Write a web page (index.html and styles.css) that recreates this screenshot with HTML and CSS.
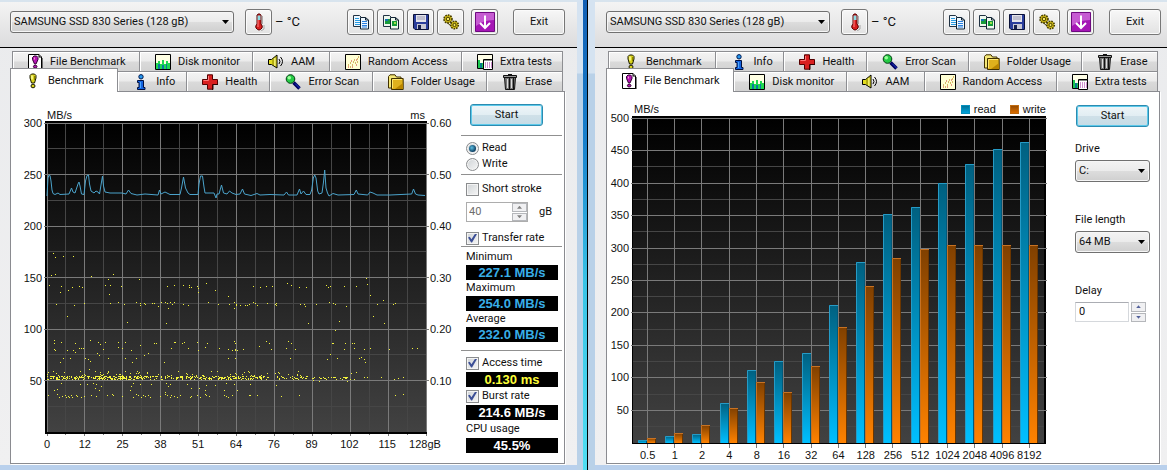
FILE: index.html
```html
<!DOCTYPE html>
<html lang="en">
<head>
<meta charset="utf-8">
<title>Disk benchmark</title>
<link rel="stylesheet" href="styles.css">
</head>
<body>
<svg class="sprite" aria-hidden="true">
  <symbol id="i-bang" viewBox="0 0 16 16"><path d="M5 2.5 6.500 1h3L11 2.500V5L9.500 10h-3L5 5z" fill="#d9d31e" stroke="#1a1a00"/><path d="M7 2.500v4" stroke="#ffffa0" stroke-width="1.500"/><path d="M9.500 3v4" stroke="#8c8600"/><ellipse cx="8" cy="13" rx="2" ry="1.800" fill="#d9d31e" stroke="#1a1a00"/></symbol>
  <symbol id="i-filebang" viewBox="0 0 16 16"><path d="M1.500.500H12L14.500 3v12.500h-13z" fill="#fff" stroke="#000"/><path d="M15 4v12H3" fill="none" stroke="#000"/><path d="M12 .500V3h2.500" fill="#ccc" stroke="#000"/><path d="M5.500 3.500 7 2h2.500L11 3.500v2L9 10H7.500L5.500 5.500z" fill="#b414b4" stroke="#300030"/><path d="M7.500 3.500v2" stroke="#f9c"/><ellipse cx="8.200" cy="12.600" rx="1.800" ry="1.400" fill="#b414b4" stroke="#300030"/></symbol>
  <symbol id="i-monitor" viewBox="0 0 16 16"><path d="M.500.500h15v15H.500z" fill="#ffffe4" stroke="#000"/><path d="M1 9h2V7h2v3h2V6h2v4h2V7h2v2h2v6H1z" fill="#20d850"/><path d="M3 10h2v5H3zM7 11h2v4H7zM11 10h1v5h-1z" fill="#087ca0"/></symbol>
  <symbol id="i-speaker" viewBox="0 0 16 16"><path d="M.500 5.500h3L9 1v13L3.500 10.500h-3z" fill="#e3dd22" stroke="#000"/><path d="M5 4.500v6.500M8 2.500v10" stroke="#827c00"/><path d="M7 4v8" stroke="#ffffa0"/><path d="M11 5q2 2.500 0 5M12.500 3q4 4.500 0 9" fill="none" stroke="#000"/></symbol>
  <symbol id="i-random" viewBox="0 0 16 16"><path d="M.500.500h15v15H.500z" fill="#ffffd4" stroke="#000"/><path d="M3 11h1M5 13h1M5 9h1M7 11h1M8 8h1M10 9h1M9 6h1M12 5h1M12 8h1M13 3h1" stroke="#b07000"/><path d="M3 13h1M7 13h1M11 11h1M6 7h1M11 6h1" stroke="#c33"/></symbol>
  <symbol id="i-extra" viewBox="0 0 16 16"><path d="M.500.500h15v14H.500z" fill="#ffffe8" stroke="#000"/><path d="M1 6h2v3h3v5H1z" fill="#1cc850"/><path d="M3 9h2v5H3z" fill="#087890"/><path d="M6.500 5.500h9v10h-9z" fill="#fff" stroke="#000"/><path d="M7 6.500h8" stroke="#888"/><path d="M8 9h7M8 11h7M8 13h7" stroke="#a020a0" stroke-dasharray="1 1"/></symbol>
  <symbol id="i-info" viewBox="0 0 16 16"><circle cx="8" cy="2.800" r="2.200" fill="#2698ee" stroke="#001850"/><path d="M4.500 6.500h6v7h1.500v2H4.500v-2H6V8.500H4.500z" fill="#1463e0" stroke="#001040"/><path d="M7.500 8v6" stroke="#4aa8ff"/></symbol>
  <symbol id="i-health" viewBox="0 0 16 16"><path d="M5.500.800h5v4.700h5v5h-5v4.700h-5v-4.700h-5v-5h5z" fill="#d92020" stroke="#500"/><path d="M6.500 2v4.500h-5" fill="none" stroke="#f77"/><path d="M10 15.500h1v-5h5" fill="none" stroke="#300"/></symbol>
  <symbol id="i-scan" viewBox="0 0 16 16"><path d="m8.500 8.500 6 6" stroke="#000060" stroke-width="3.500"/><path d="m10 9.500 4.500 4.500" stroke="#2040d0"/><circle cx="5.500" cy="5" r="4.300" fill="#25ca45" stroke="#004010"/><circle cx="4.300" cy="3.800" r="1.800" fill="#9f9"/></symbol>
  <symbol id="i-folder" viewBox="0 0 16 16"><path d="M.500 14V2.500L2 .800h5L8.500 3H13v11z" fill="#f5e878" stroke="#403000"/><path d="M3.500 4.500h11.700v11H3.500z" fill="#dfb11d" stroke="#403000"/><path d="M4.500 14V5.500H14" fill="none" stroke="#ffe870"/><path d="M7 15h8V9z" fill="#b98600"/></symbol>
  <symbol id="i-trash" viewBox="0 0 16 16"><path d="M2.500 3.500h11l-1 12h-9z" fill="#777" stroke="#111"/><path d="M1.500 1.500h13v2h-13zM6 .500h4" fill="#999" stroke="#111"/><path d="M5.500 5v9M9.500 5v9" stroke="#ddd"/><path d="M7.500 4v11M11.500 4v11" stroke="#111"/></symbol>
  <symbol id="i-thermo" viewBox="0 0 16 18"><path d="M6 2q2-2.500 4 0v9q2 2 1 4-1.500 2-3 2t-3-2q-1-2 1-4z" fill="#d81e1e" stroke="#500"/><path d="M6.500 2.500h3V7h-3z" fill="#8cdde4"/><path d="M7 7v7" stroke="#f88"/><path d="M11.500 3v8M13 12v4l-3 2" fill="none" stroke="#999" stroke-width=".8"/></symbol>
  <symbol id="i-copy" viewBox="0 0 18 16"><path d="M1.500 1.500h6l2 2v9h-8z" fill="#eef8ff" stroke="#234"/><path d="M3 4.500h4M3 6.500h5M3 8.500h5M3 10.500h5" stroke="#2a9be0"/><path d="M8.500 3.500h5L16.500 6v9h-8z" fill="#eef8ff" stroke="#123"/><path d="M13.500 3.500V6h3" fill="none" stroke="#123"/><path d="M10 7.500h5M10 9.500h5M10 11.500h5M10 13h5" stroke="#2a80e0"/></symbol>
  <symbol id="i-copyimg" viewBox="0 0 18 16"><path d="M1.500 1.500h6l2 2v9h-8z" fill="#eef8ee" stroke="#234"/><path d="M3 5h5v5H3z" fill="#189b3b"/><path d="M3 5h3v2H3z" fill="#1670b0"/><path d="M8.500 3.500h5L16.500 6v9h-8z" fill="#eef8ee" stroke="#123"/><path d="M13.500 3.500V6h3" fill="none" stroke="#123"/><path d="M10 7h5v5h-5z" fill="#149a38"/><path d="M12 8h2v2h-2z" fill="#9ce04a"/></symbol>
  <symbol id="i-save" viewBox="0 0 18 16"><path d="M1.500.500h15v15H3L1.500 14z" fill="#2b3e9c" stroke="#0b1238"/><path d="M4 1h10v7H4z" fill="#e4e4ea"/><path d="M5 3h8M5 5h8" stroke="#9a9ab4"/><path d="M5 10h9v5H5z" fill="#c9c9d4"/><path d="M6 11h3v4H6z" fill="#16204e"/></symbol>
  <symbol id="i-gears" viewBox="0 0 18 16"><circle cx="6" cy="5" r="4" fill="#d0bb18" stroke="#443b00" stroke-width="1.600" stroke-dasharray="1.600 1"/><circle cx="6" cy="5" r="1.800" fill="#f4e860" stroke="#443b00"/><circle cx="12.500" cy="11" r="3.800" fill="#d0bb18" stroke="#443b00" stroke-width="1.600" stroke-dasharray="1.600 1"/><circle cx="12.500" cy="11" r="1.600" fill="#f4e860" stroke="#443b00"/><path d="M5 8.500 9 12" stroke="#443b00"/></symbol>
  <symbol id="i-down" viewBox="0 0 20 20"><path d="M.500.500h19v19H.500z" fill="#a516b5" stroke="#6e0a80"/><path d="M1 1h18v7Q8 8 1 14z" fill="#c65bd2"/><path d="M10 3.500V16M5 11l5 5 5-5" fill="none" stroke="#fff" stroke-width="2"/></symbol>
</svg>

<main class="desktop">
  <section class="app app-left" aria-label="Benchmark window">
    <header class="toolbar">
      <span class="picker picker-drive"><select aria-label="Disk"><option>SAMSUNG SSD 830 Series (128 gB)</option></select></span>
      <button class="tool" aria-label="Temperature"><svg class="icon-thermo"><use href="#i-thermo"/></svg></button>
      <span class="temp">– °C</span>
      <span class="tools">
        <button class="tool" aria-label="Copy text"><svg><use href="#i-copy"/></svg></button>
        <button class="tool" aria-label="Copy image"><svg><use href="#i-copyimg"/></svg></button>
        <button class="tool" aria-label="Save"><svg><use href="#i-save"/></svg></button>
        <button class="tool" aria-label="Options"><svg><use href="#i-gears"/></svg></button>
      </span>
      <button class="tool" aria-label="Minimize"><svg class="icon-down"><use href="#i-down"/></svg></button>
      <button class="exit">Exit</button>
    </header>
    <nav class="tabs">
      <div class="tab-row">
        <button class="tab t-file"><svg><use href="#i-filebang"/></svg>File Benchmark</button>
        <button class="tab t-disk"><svg><use href="#i-monitor"/></svg>Disk monitor</button>
        <button class="tab t-aam"><svg><use href="#i-speaker"/></svg>AAM</button>
        <button class="tab t-random"><svg><use href="#i-random"/></svg>Random Access</button>
        <button class="tab t-extra"><svg><use href="#i-extra"/></svg>Extra tests</button>
      </div>
      <div class="tab-row tab-row-front">
        <button class="tab t-bench active"><svg><use href="#i-bang"/></svg>Benchmark</button>
        <button class="tab t-info"><svg><use href="#i-info"/></svg>Info</button>
        <button class="tab t-health"><svg><use href="#i-health"/></svg>Health</button>
        <button class="tab t-scan"><svg><use href="#i-scan"/></svg>Error Scan</button>
        <button class="tab t-folder"><svg><use href="#i-folder"/></svg>Folder Usage</button>
        <button class="tab t-erase"><svg><use href="#i-trash"/></svg>Erase</button>
      </div>
    </nav>
    <div class="panel panel-bench">
      <div class="chart chart-transfer">
        <div class="chart-head"><span>MB/s</span><span>ms</span></div>
        <div class="y-axis"><span>300</span><span>250</span><span>200</span><span>150</span><span>100</span><span>50</span></div>
        <svg class="plot" id="transfer" viewBox="45 121 382 313" role="img" aria-label="Transfer rate and access time"></svg>
        <div class="y-axis y-axis-right"><span>0.60</span><span>0.50</span><span>0.40</span><span>0.30</span><span>0.20</span><span>0.10</span></div>
        <div class="x-axis"><div class="x-labels"><span>0</span><span>12</span><span>25</span><span>38</span><span>51</span><span>64</span><span>76</span><span>89</span><span>102</span><span>115</span><span>128gB</span></div></div>
      </div>
      <aside class="side">
        <button class="start">Start</button>
        <div class="group group-mode">
          <label class="check"><input type="radio" name="mode" checked>Read</label>
          <label class="check"><input type="radio" name="mode">Write</label>
        </div>
        <div class="group group-stroke">
          <label class="check"><input type="checkbox">Short stroke</label>
          <div class="stroke-size">
            <span class="spin spin-off"><input type="text" value="40" aria-label="Stroke size" disabled><span class="steps"><button class="up" aria-label="More" disabled></button><button class="dn" aria-label="Less" disabled></button></span></span>
            <span>gB</span>
          </div>
          <label class="check"><input type="checkbox" checked>Transfer rate</label>
        </div>
        <div class="group group-rate">
          <span class="caption">Minimum</span><output class="blue">227.1 MB/s</output>
          <span class="caption">Maximum</span><output class="blue">254.0 MB/s</output>
          <span class="caption">Average</span><output class="blue">232.0 MB/s</output>
        </div>
        <div class="group group-access">
          <label class="check"><input type="checkbox" checked>Access time</label><output class="yellow">0.130 ms</output>
          <label class="check"><input type="checkbox" checked>Burst rate</label><output>214.6 MB/s</output>
          <span class="caption">CPU usage</span><output>45.5%</output>
        </div>
      </aside>
    </div>
  </section>

  <div class="gap"><i class="frame"></i><i class="wallpaper"></i><i class="frame"></i></div>

  <section class="app app-right" aria-label="File benchmark window">
    <header class="toolbar">
      <span class="picker picker-drive"><select aria-label="Disk"><option>SAMSUNG SSD 830 Series (128 gB)</option></select></span>
      <button class="tool" aria-label="Temperature"><svg class="icon-thermo"><use href="#i-thermo"/></svg></button>
      <span class="temp">– °C</span>
      <span class="tools">
        <button class="tool" aria-label="Copy text"><svg><use href="#i-copy"/></svg></button>
        <button class="tool" aria-label="Copy image"><svg><use href="#i-copyimg"/></svg></button>
        <button class="tool" aria-label="Save"><svg><use href="#i-save"/></svg></button>
        <button class="tool" aria-label="Options"><svg><use href="#i-gears"/></svg></button>
      </span>
      <button class="tool" aria-label="Minimize"><svg class="icon-down"><use href="#i-down"/></svg></button>
      <button class="exit">Exit</button>
    </header>
    <nav class="tabs">
      <div class="tab-row">
        <button class="tab t-bench"><svg><use href="#i-bang"/></svg>Benchmark</button>
        <button class="tab t-info"><svg><use href="#i-info"/></svg>Info</button>
        <button class="tab t-health"><svg><use href="#i-health"/></svg>Health</button>
        <button class="tab t-scan"><svg><use href="#i-scan"/></svg>Error Scan</button>
        <button class="tab t-folder"><svg><use href="#i-folder"/></svg>Folder Usage</button>
        <button class="tab t-erase"><svg><use href="#i-trash"/></svg>Erase</button>
      </div>
      <div class="tab-row tab-row-front">
        <button class="tab t-file active"><svg><use href="#i-filebang"/></svg>File Benchmark</button>
        <button class="tab t-disk"><svg><use href="#i-monitor"/></svg>Disk monitor</button>
        <button class="tab t-aam"><svg><use href="#i-speaker"/></svg>AAM</button>
        <button class="tab t-random"><svg><use href="#i-random"/></svg>Random Access</button>
        <button class="tab t-extra"><svg><use href="#i-extra"/></svg>Extra tests</button>
      </div>
    </nav>
    <div class="panel panel-file">
      <div class="chart chart-file">
        <div class="chart-head"><span>MB/s</span><span class="legend"><i class="key key-read"></i>read<i class="key key-write"></i>write</span></div>
        <div class="y-axis"><span>500</span><span>450</span><span>400</span><span>350</span><span>300</span><span>250</span><span>200</span><span>150</span><span>100</span><span>50</span></div>
        <svg class="plot" id="file" viewBox="632 116 414 328" role="img" aria-label="Read and write rate by block size"></svg>
        <div class="x-axis"><div class="x-labels"><span>0.5</span><span>1</span><span>2</span><span>4</span><span>8</span><span>16</span><span>32</span><span>64</span><span>128</span><span>256</span><span>512</span><span>1024</span><span>2048</span><span>4096</span><span>8192</span></div></div>
      </div>
      <aside class="options">
        <button class="start">Start</button>
        <div class="field"><label for="drive">Drive</label><span class="picker"><select id="drive"><option>C:</option></select></span></div>
        <div class="field"><label for="length">File length</label><span class="picker"><select id="length"><option>64 MB</option></select></span></div>
        <div class="field"><label for="delay">Delay</label><span class="spin spin-delay"><input id="delay" type="text" value="0"><span class="steps"><button class="up" aria-label="More"></button><button class="dn" aria-label="Less"></button></span></span></div>
      </aside>
    </div>
  </section>
</main>
<script src="charts.js"></script>
</body>
</html>
```
FILE: styles.css
```css
* { box-sizing: border-box; }

body {
  margin: 0;
  min-height: 100vh;
  background: #b9d1ea;
  color: #111;
  font: 11px/16px Roboto, "Liberation Sans", sans-serif;
}

button, input, select, output { font: inherit; color: inherit; }
button { padding: 0; }
.sprite { display: none; }

.desktop {
  display: grid;
  grid-template-columns: 577fr 18px 572fr;
  min-height: 100vh;
}

.app {
  background: linear-gradient(#eaebed, #f0f0f1);
  border-top: 2px solid #d8e4ee;
  border-bottom: 5px solid #b9d0ec;
}

.gap {
  display: grid;
  grid-template-columns: 6px 5px 7px;
}
.frame { background: linear-gradient(#d5e3f1 73px, #b9d1e8 74px); }
.wallpaper {
  border-right: 1px solid #000;
  background: linear-gradient(#125fb4, #1980cc 30%, #3ac3e6 60%, #50def2);
}

/* toolbar */
.toolbar {
  display: flex;
  align-items: center;
  padding: 7px 12px 12px 10px;
  border-bottom: 1px solid #000;
  background: linear-gradient(#f4f4f4, #dcdcdd);
}
.app-right .toolbar { padding: 7px 6px 12px 11px; }

.picker { display: grid; align-items: center; }
.picker select {
  grid-area: 1 / 1;
  width: 100%;
  height: 22px;
  padding: 0 3px;
  appearance: none;
  border: 1px solid #707070;
  border-radius: 3px;
  background: linear-gradient(#f3f3f3, #ebebeb 49%, #dddddd 50%, #cfcfcf);
  box-shadow: inset 0 0 0 1px #f6f6f6;
}
.picker::after {
  content: "";
  grid-area: 1 / 1;
  justify-self: end;
  width: 7px;
  height: 4px;
  margin-right: 5px;
  background: #000;
  clip-path: polygon(0 0, 100% 0, 50% 100%);
  pointer-events: none;
}
.picker-drive { width: 224px; margin-right: 11px; }

.tool, .exit {
  display: grid;
  place-items: center;
  width: 27px;
  height: 26px;
  border: 1px solid #777;
  border-radius: 3px;
  background: linear-gradient(#f7f7f7, #e2e2e2);
  box-shadow: inset 0 0 0 1px #fbfbfb;
}
.tool svg { width: 18px; height: 16px; }
.tool .icon-thermo { width: 16px; height: 18px; }
.tool .icon-down { width: 20px; height: 20px; }
.temp { flex: 1; padding-left: 3px; font-size: 13px; }
.tools { display: flex; gap: 3px; margin-right: 7px; }
.exit { width: 52px; margin-left: 15px; }

/* tabs */
.tabs { margin: 3px 14px 0 12px; }
.app-right .tabs { margin: 3px 9px 0 13px; }
.tab-row { display: flex; }
.tab-row-front { margin-left: -2px; }
.tab {
  display: flex;
  align-items: center;
  gap: 7px;
  height: 20px;
  padding-left: 14px;
  min-width: 0;
  white-space: nowrap;
  border: solid #8d8e92;
  border-width: 1px 1px 0 1px;
  box-shadow: inset 1px 1px 0 #fff;
  background: linear-gradient(#f4f4f4, #ebebeb 48%, #dadada 52%, #d2d2d2);
}
.tab + .tab { border-left: 0; padding-left: 15px; }
.tab svg { flex: none; width: 16px; height: 16px; }
.active {
  position: relative;
  z-index: 1;
  height: 24px;
  margin: -3px 0 -1px;
  background: #fff;
}
.t-file { flex: 128 128 128px; }
.t-disk { flex: 113 113 113px; }
.t-aam { flex: 77 77 77px; }
.t-random { flex: 132 132 132px; }
.t-extra { flex: 101 101 101px; }
.t-bench { flex: 108 108 108px; }
.t-info { flex: 69 69 69px; }
.t-health { flex: 83 83 83px; }
.t-scan { flex: 102 102 102px; }
.t-folder { flex: 114 114 114px; }
.t-erase { flex: 76 76 76px; }

/* panels */
.panel {
  display: grid;
  align-items: start;
  border: 1px solid #8a8b90;
  background: #fff;
  box-shadow: 1px 1px 0 #fff;
}
.panel-bench {
  grid-template-columns: 1fr 101px;
  margin: 0 12px 0 10px;
  padding: 0 2px 10px 0;
}
.panel-file {
  grid-template-columns: 1fr 75px;
  column-gap: 29px;
  margin: 0 7px 0 11px;
  padding: 0 9px 1px 0;
}

/* charts */
.chart {
  display: grid;
  font: 11px/14px "Liberation Sans", Arial, sans-serif;
}
.chart-transfer { grid-template: 29px auto auto / 34px 1fr 34px; }
.chart-file { grid-template: 24px auto auto / 25px 1fr; }
.chart-head {
  grid-column: 2;
  display: flex;
  justify-content: space-between;
  align-items: end;
  padding: 0 2px;
  line-height: 12px;
}
.chart-file .chart-head { padding: 0 0 1px 2px; }
.legend { display: flex; align-items: center; gap: 4px; }
.key { width: 9px; height: 9px; border: 1px solid #0590bd; }
.key-read { background: linear-gradient(#007299, #00a3dc); }
.key-write { border-color: #c06b10; background: linear-gradient(#964b00, #dc6e00); margin-left: 10px; }
.plot {
  grid-row: 2;
  grid-column: 2;
  display: block;
  width: 100%;
  overflow: visible;
}
.y-axis {
  grid-row: 2;
  grid-column: 1;
  display: grid;
  grid-auto-rows: 1fr;
  margin: -5px 0 9px;
  padding-right: 3px;
  text-align: right;
}
.y-axis-right { grid-column: 3; padding: 0 0 0 3px; text-align: left; }
.x-axis { grid-column: 2; padding: 3px 2px 0; }
.x-labels { display: grid; grid-auto-flow: column; grid-auto-columns: minmax(0, 1fr); justify-items: center; }
.chart-transfer .x-labels { margin: 0 -5%; }
.chart-file .x-axis { padding: 4px 3px 0 2px; }

.grid-minor { stroke: #464646; }
.grid-major { stroke: #7a7a7a; }
.rate { fill: none; stroke: #4ba3cb; }
.dot { fill: #f2f23c; shape-rendering: crispEdges; }

/* side controls */
.start {
  width: 73px;
  height: 22px;
  border: 1px solid #2c8bb0;
  border-radius: 3px;
  background: linear-gradient(#eef5f8, #e2eef3 48%, #cfe0e8 52%, #c5dce6);
  box-shadow: inset 0 0 0 1px #5cc9ea;
}
.side { padding-top: 12px; }
.side .start { display: block; margin: 0 0 9px 9px; }
.group {
  display: flex;
  flex-direction: column;
  border-top: 1px solid #909090;
  padding-left: 5px;
}
.group-mode { padding-top: 4px; padding-bottom: 2px; }
.group-stroke { padding-top: 6px; }
.group-rate { padding-bottom: 8px; padding-top: 2px; }
.group-access { padding-top: 4px; gap: 1px; }
.group-rate, .group-access { padding-right: 4px; }
.caption { height: 16px; }
.check { display: flex; align-items: center; gap: 3px; height: 16px; white-space: nowrap; }
.check input {
  display: grid;
  place-items: center;
  flex: none;
  width: 13px;
  height: 13px;
  margin: 0;
  appearance: none;
  border: 1px solid #8a8c8e;
  background: linear-gradient(135deg, #cfd3d6, #f6f6f6);
  box-shadow: inset 0 0 0 1px #f4f4f4;
}
.check input[type="radio"] { border-radius: 50%; }
.check input[type="radio"]:checked::after {
  content: "";
  width: 7px;
  height: 7px;
  border-radius: 50%;
  background: radial-gradient(circle at 40% 40%, #5cc0e4, #0c3c60 70%);
}
.check input[type="checkbox"]:checked::after {
  content: "";
  width: 9px;
  height: 9px;
  background: #3c4f96;
  clip-path: polygon(0 45%, 20% 35%, 38% 65%, 80% 0, 100% 5%, 45% 100%, 35% 100%);
}
.stroke-size { display: flex; align-items: center; gap: 11px; margin: 5px 0 8px; }
.spin { display: flex; height: 20px; }
.spin input {
  width: 54px;
  min-width: 0;
  padding: 0 3px;
  border: 1px solid #d5d8dc;
  border-top-color: #abadb3;
  background: #fff;
}
.steps { display: grid; grid-template-rows: 1fr 1fr; gap: 1px; width: 15px; }
.steps button { display: grid; place-items: center; border: 1px solid #b5b7bb; background: #f0f0f2; }
.steps button::after { content: ""; width: 5px; height: 3px; background: #54629c; }
.steps .up::after { clip-path: polygon(50% 0, 100% 100%, 0 100%); }
.steps .dn::after { clip-path: polygon(0 0, 100% 0, 50% 100%); }
.spin-off { width: 62px; border: 1px solid #adadad; color: #6d6d6d; }
.spin-off input { flex: 1; border: 0; padding: 0 2px; }
.spin-off .steps button::after { background: #808080; }
.spin-delay { gap: 2px; }

output {
  height: 15px;
  background: #000;
  color: #fff;
  font: bold 13px/15px "Liberation Sans", Arial, sans-serif;
  text-align: center;
}
.blue { color: #38aee8; }
.yellow { color: #ffff38; }

.options { padding-top: 13px; }
.options .start { display: block; margin: 0 0 14px 1px; }
.field { display: grid; gap: 3px; margin-bottom: 30px; }
```
FILE: charts.js
```js
const NS = "http://www.w3.org/2000/svg";

function add(svg, tag, attrs) {
  const node = document.createElementNS(NS, tag);
  for (const key in attrs) node.setAttribute(key, attrs[key]);
  svg.append(node);
  return node;
}

function gradient(svg, id, from, to) {
  const g = add(svg, "linearGradient", { id, x1: 0, y1: 0, x2: 0, y2: 1 });
  add(g, "stop", { offset: 0, "stop-color": from });
  add(g, "stop", { offset: 1, "stop-color": to });
}

function rule(svg, cls, x1, y1, x2, y2) {
  add(svg, "line", { class: cls, x1, y1, x2, y2 });
}

const snap = (v) => Math.floor(v) + 0.5;

function drawTransfer() {
  const svg = document.getElementById("transfer");
  gradient(svg, "bg-transfer", "#000", "#424242");
  add(svg, "rect", { x: 45, y: 121, width: 382, height: 313, fill: "#000" });
  add(svg, "rect", { x: 47, y: 123, width: 379, height: 309, fill: "url(#bg-transfer)" });
  for (const odd of [1, 0]) {
    const cls = odd ? "grid-minor" : "grid-major";
    for (let i = odd; i <= 20; i += 2) {
      const x = snap(47 + i * 18.95);
      rule(svg, cls, x, 123, x, 432);
      rule(svg, "grid-major", x, 434, x, odd ? 435 : 436);
    }
    for (let i = odd; i < 12; i += 2) {
      const y = snap(123.2 + i * 25.75);
      rule(svg, cls, odd ? 47 : 44, y, odd ? 426 : 429, y);
    }
  }

  add(svg, "polyline", { class: "rate", points: `47,196 48,178 49,175 50,175.5 51,181 52,190 53,193.5 55,194.5 58,193 60,194.5 69,194 71.5,188 73,192 75,193 78,184 79,182 80,186 81.5,194 84,194.5 85.5,181 87,175.5 88.5,175 89.5,184 91,191 94,193 96,191 98,192 99.5,194 101,185 102.5,176 103.5,186 105,192 110,193 122,193 126,194 128.5,190 131,193.5 137,195 145,194 158,195 159.5,190 161,194 165,192 170,194.5 180,194.5 181.5,188 183.5,177 185.5,188 188,193 190,194.5 198,194.5 199,184 200.5,176 202.5,176 204,187 205,193 214,193 216,198 217,194 219,194 221.5,185 223.5,193 227,194 229.5,191 232,193 236,194.5 240,194 242.5,189 244.5,194 251,195.500 257,193.500 260,195 270,194.500 284,195 286.5,192 288.500,195 297,195 299.5,189 301,194 303.5,191 306,194.500 310,194.5 311.7,190 313.3,178 314.7,175 316,178 317.7,191 319,194 322,193 323.5,182 324.7,170 326,188 327.5,193 329,196 333,193.5 338,195 354,194.5 356.3,190 358,194 367.7,195 370,192 373,193 377,195 390,195 411.7,194 413.5,189 415.500,194 418,195 425,195.5` });

  // access-time samples, plotted on thirds of a pixel from three origins
  const clouds = [
    [0, 110, "160,430 166,442 190,439 220,439 154,495 166,493 148,526 184,529 217,532 238,529 247,532 274,499 340,493 325,508 316,526 331,526 364,529 418,508 502,529 523,526 550,526 568,526 569,532 574,532 592,529 595,535 619,520"],
    [230, 110, "70,530 91,532 109,529 127,529 172,520 184,526 208,532 229,532 289,526 295,532 301,529 343,529 379,529 409,505 412,523"],
    [0, 290, "181,7 205,2 328,13 595,7 646,1 685,19 169,43 223,46 253,39 331,40 355,37 373,43 409,37 421,46 421,39 433,40 436,43 457,40 463,40 475,49 484,37 496,38 502,40 511,37 517,43 523,37 505,55 550,43 565,46 625,37 655,43 688,43 703,37 703,55 709,43 202,79 382,97 499,100 163,151 163,160 184,157 226,160 271,151 295,157 301,163 316,157 355,157 355,172 376,157 421,166 463,160 469,160 523,157 526,157 547,160 553,157 592,157 622,160 616,172 163,178 166,181 202,181 220,180 226,187 238,175 244,175 250,175 310,178 367,175 394,181 514,175 565,175 595,181 658,175 685,178 697,181 703,154 706,181 292,190 298,196 433,196 445,190 190,205 181,217 211,205 256,205 265,208 271,214 325,205 376,205 409,205 397,217 493,217 685,205 706,205 268,238 172,298 163,301 184,280 241,283 262,283 280,280 289,283 286,295 298,301 304,289 394,289 400,280 391,301 421,283 454,283 499,280 505,289 511,283 496,307 562,283 574,295 598,295 619,286 616,301 646,286 673,301 679,280 703,283"],
    [0, 290, "144,316 172,313 178,322 187,319 196,316 199,322 205,319 208,322 214,316 217,322 229,316 232,319 244,322 253,319 274,316 289,319 322,316 337,313 340,316 367,319 400,322 409,313 415,316 424,322 430,316 436,319 445,316 451,322 481,319 496,313 502,316 511,322 514,316 523,319 532,322 541,316 571,322 574,319 592,316 601,322 616,313 619,316 628,319 673,316 679,319 685,322 697,316"],
    [230, 290, "421,16 442,43 460,31 490,43 496,40 430,79 463,100 13,37 13,55 19,46 31,46 46,46 52,46 58,43 70,37 76,40 82,46 112,40 136,43 139,46 139,40 211,43 223,43 226,49 259,43 298,37 310,40 316,43 349,49 235,100 328,94 316,121 109,154 118,160 124,178 88,169 175,154 184,160 169,175 196,178 16,160 16,178 22,181 40,178 7,181 307,160 310,160 346,160 343,178 367,160 373,160 373,175 403,178 421,175 478,178 547,175 562,175 301,193 292,208 322,205 388,205 394,202 403,208 406,217 16,205 181,205 493,268 505,265 520,262 454,262 403,262 412,262 268,274 250,271 364,250 379,247 361,268 373,268 352,274 496,316 520,313 61,283 22,301 7,316 58,316 61,316 82,316 139,286 154,319 208,316"]
  ];
  const dot = (x, y) => add(svg, "rect", { class: "dot", x: Math.floor(x), y: Math.floor(y), width: 1, height: 1 });
  for (const [ox, oy, text] of clouds) {
    for (const pair of text.split(" ")) {
      const [x, y] = pair.split(",").map(Number);
      dot(ox + x / 3, oy + y / 3);
    }
  }

  let seed = 7;
  const rnd = () => (seed = (seed * 16807) % 2147483647) / 2147483647;
  const band = (from, to, count, y, spread) => {
    for (let i = 0; i < count; i++) dot(from + rnd() * (to - from), y + rnd() * spread);
  };
  band(47, 130, 190, 376, 3.6);
  band(130, 260, 220, 376, 3.6);
  band(260, 308, 50, 376, 3.6);
  band(310, 350, 26, 377, 2.6);
  band(47, 130, 26, 371, 5);
  band(130, 308, 40, 371, 5);
}

function drawFile() {
  const svg = document.getElementById("file");
  const read = [5, 10, 13, 62, 112, 125.5, 138, 213, 278, 353, 364, 401, 430, 452, 463];
  const write = [7, 14.5, 28, 53, 93, 78, 118, 178, 242, 285.5, 298, 305.5, 305.5, 305.5, 305.5];
  gradient(svg, "bg-file", "#000", "#424242");
  gradient(svg, "bar-read", "#006080", "#00bfff");
  gradient(svg, "bar-write", "#804000", "#ff8200");
  add(svg, "rect", { x: 632, y: 116, width: 414, height: 328, fill: "#000" });
  add(svg, "rect", { x: 633, y: 118, width: 411, height: 325, fill: "url(#bg-file)" });
  for (const odd of [1, 0]) {
    for (let i = odd; i < 20; i += 2) {
      const y = snap(118.2 + i * 16.23);
      rule(svg, odd ? "grid-minor" : "grid-major", odd ? 633 : 631, y, odd ? 1044 : 1047, y);
    }
  }
  const bar = (x, value, fill, light, dark) => {
    const top = Math.round(442.8 - value * 0.649);
    add(svg, "rect", { x, y: top, width: 9, height: 443 - top, fill });
    add(svg, "path", { d: `M${x + 0.5} 443V${top + 0.5}H${x + 9}`, fill: "none", stroke: light });
    add(svg, "path", { d: `M${x + 8.5} 443V${top + 1}`, stroke: dark });
  };
  for (let i = 0; i < 15; i++) {
    const x = Math.floor(647.3 + i * 27.29);
    rule(svg, "grid-major", x + 0.5, 118, x + 0.5, 443);
    rule(svg, "grid-major", x + 0.5, 444, x + 0.5, 448);
    bar(x - 9, read[i], "url(#bar-read)", "#269bc6", "#00597b");
    bar(x, write[i], "url(#bar-write)", "#c77223", "#6b3600");
  }
}

drawTransfer();
drawFile();
```
